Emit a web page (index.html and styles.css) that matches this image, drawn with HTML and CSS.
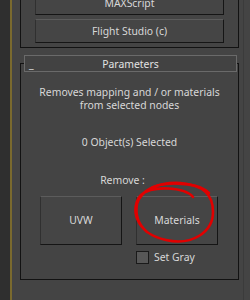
FILE: index.html
```html
<!DOCTYPE html>
<html lang="en">
  <head>
    <meta charset="UTF-8" />
    <title>Utilities</title>
    <link rel="stylesheet" href="styles.css">
  </head>
  <body>
    <div class="app">
      <div class="strip"></div>
      <div class="accent"></div>
      <div class="panel-col">
        <div class="rollout rollout-top">
          <button class="btn">MAXScript</button>
          <button class="btn">Flight Studio (c)</button>
        </div>
        <div class="rollout-head">
          <span class="toggle">_</span>
          <span class="title">Parameters</span>
        </div>
        <div class="rollout rollout-params">
          <p class="note">Removes mapping and / or materials<br>from selected nodes</p>
          <p class="count">0 Object(s) Selected</p>
          <p class="label">Remove :</p>
          <div class="actions">
            <button class="btn btn-big">UVW</button>
            <button class="btn btn-big">Materials</button>
            <label class="check"><span class="box"></span>Set Gray</label>
          </div>
        </div>
      </div>
      <div class="gutter"><div class="gutter-line"></div></div>
    </div>

    <svg class="mark" width="250" height="300" viewBox="0 0 250 300">
      <path d="M193 197 C185 187, 152 185, 141 195 C130 207, 134 233, 166 240 C192 246, 213 232, 213 212 C213 195, 204 185, 180 183 C160 182, 141 189, 137 204 C135 215, 139 225, 147 232" />
      <path d="M148 190 C160 181, 196 181, 209 193" />
    </svg>
  </body>
</html>
```

FILE: styles.css
```css
* {
  padding: 0;
  margin: 0;
  box-sizing: border-box;
}

body {
  width: 250px;
  height: 300px;
  overflow: hidden;
  background: #444444;
  font-family: "Noto Sans", "DejaVu Sans", sans-serif;
  font-size: 10.4px;
  color: #d8d8d8;
}

.app {
  display: flex;
  height: 300px;
}

.strip {
  width: 10px;
  background: #2f2f2f;
}

.accent {
  width: 2px;
  background: #7a6a2e;
}

.panel-col {
  width: 227px;
  padding-left: 8px;
}

.gutter {
  width: 11px;
  padding-left: 4px;
}

.gutter-line {
  width: 1px;
  height: 100%;
  background: #3b3b3b;
}

.rollout {
  width: 219px;
  border: 1px solid #121212;
}

.rollout-top {
  margin-top: -9px;
  border-top: none;
  padding: 0 14px 4px;
}

.btn {
  display: block;
  width: 100%;
  height: 24px;
  font: inherit;
  color: inherit;
  background: #454545;
  border: 1px solid #151515;
  border-top-color: #5c5c5c;
  border-left-color: #303030;
}

.btn + .btn {
  margin-top: 4px;
}

.rollout-head {
  position: relative;
  z-index: 1;
  display: flex;
  align-items: center;
  width: 213px;
  height: 17px;
  margin: 7px 0 0 4px;
  padding: 0 4px;
  background: #424242;
  border: 1px solid #6a6a6a;
  color: #e2e2e2;
}

.toggle {
  width: 10px;
  line-height: 10px;
}

.title {
  flex: 1;
  text-align: center;
  margin-right: 10px;
}

.rollout-params {
  margin-top: -9px;
  height: 217px;
  padding-top: 22px;
  text-align: center;
  line-height: 13px;
}

.count {
  margin-top: 24px;
}

.label {
  margin-top: 25px;
  padding-right: 14px;
}

.actions {
  display: grid;
  grid-template-columns: 82px 82px;
  column-gap: 14px;
  row-gap: 6px;
  margin: 9px 0 0 19px;
}

.btn-big {
  height: 49px;
}

.btn-big + .btn-big {
  margin-top: 0;
}

.check {
  grid-column: 2;
  display: flex;
  align-items: center;
  gap: 5px;
  height: 13px;
}

.box {
  width: 13px;
  height: 13px;
  background: #575757;
  border: 1px solid #1a1a1a;
}

.mark {
  position: absolute;
  top: 0;
  left: 0;
  fill: none;
  stroke: #e10000;
  stroke-width: 2.6;
  stroke-linecap: round;
}
```
